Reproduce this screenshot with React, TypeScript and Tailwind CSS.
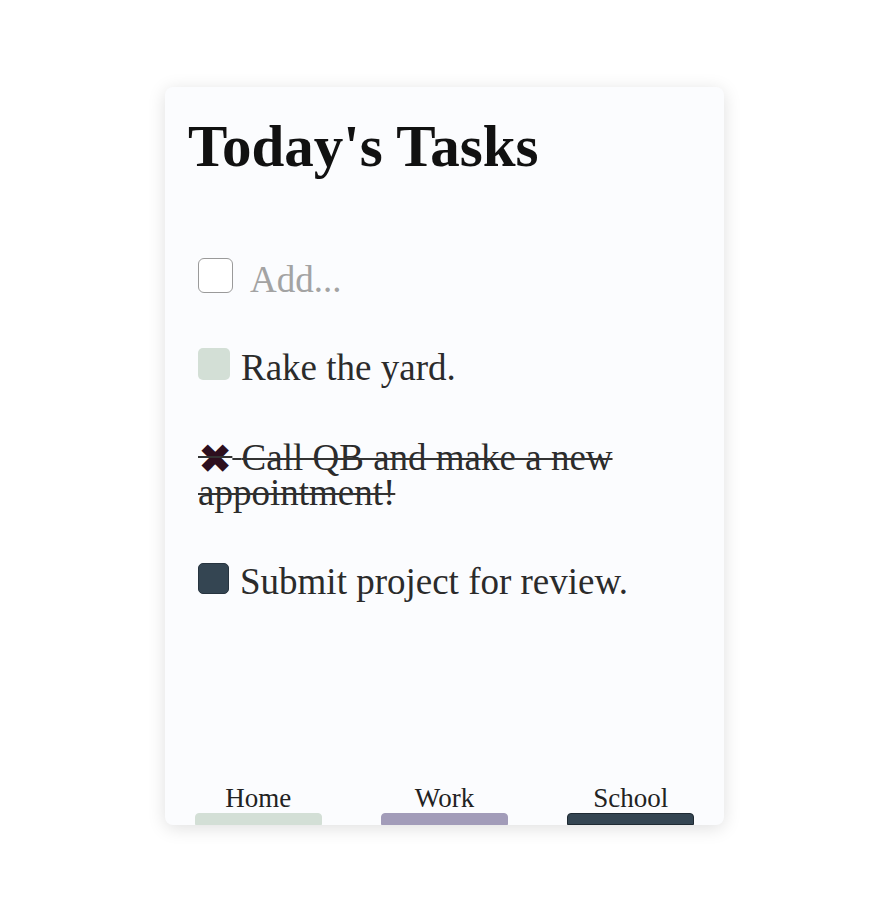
const tabs = [
  { name: "Home", color: "bg-[#d3dfd6] border-[#d3dfd6]" },
  { name: "Work", color: "bg-[#a29cb9] border-[#a29cb9]" },
  { name: "School", color: "bg-[#344552] border-[#1f2a33]" },
];

export default function App() {
  return (
    <div className="min-h-screen bg-white pl-[165px] pt-[87px] font-['Liberation_Serif',serif]">
      <div className="flex h-[738px] w-[559px] flex-col overflow-hidden rounded-lg bg-[#fbfcfe] shadow-[0_3px_18px_rgba(0,0,0,0.13)]">
        <h1 className="px-[23px] pt-[25px] text-[59px] font-bold leading-[68px] text-[#111]">Today's Tasks</h1>

        <div className="ml-[33px] mr-[22px] text-[37px] leading-[35px] text-[#2b2b2b]">
          <p className="mt-[78px]">
            <span className="mr-[17px] inline-block h-[35px] w-[35px] rounded-md border-[1.5px] border-[#9a9a9a] bg-white align-[-1px]" />
            <span className="text-[#a3a3a3]">Add...</span>
          </p>

          <p className="mt-[51px]">
            <span className="mr-[11px] inline-block h-[32px] w-[32px] rounded-[5px] bg-[#d3dfd6] align-[0px]" />
            Rake the yard.
          </p>

          <p className="mt-[55px] line-through decoration-[#333] decoration-[2px]">
            <span className="font-['DejaVu_Sans',sans-serif] text-[41px] leading-[0px] text-[#2d0f1e] align-[-3px]">✖</span>
            {" "}Call QB and make a new appointment!
          </p>

          <p className="mt-[53px]">
            <span className="mr-[11px] inline-block h-[31px] w-[31px] rounded-[5px] border border-[#27343f] bg-[#344552] align-[0px]" />
            Submit project for review.
          </p>
        </div>

        <div className="mt-auto grid grid-cols-3">
          {tabs.map((tab) => (
            <div key={tab.name} className="flex flex-col items-center">
              <span className="text-[27px] leading-[27px] text-[#222]">{tab.name}</span>
              <div className={`mt-px h-[12px] w-[127px] rounded-t-[4px] border ${tab.color}`} />
            </div>
          ))}
        </div>
      </div>
    </div>
  );
}
